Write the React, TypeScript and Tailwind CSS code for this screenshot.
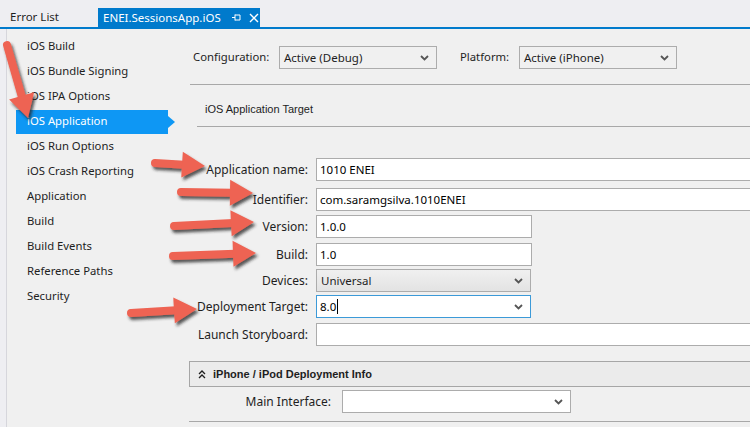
import React from "react";

const SIDEBAR = [
  "iOS Build",
  "iOS Bundle Signing",
  "iOS IPA Options",
  "iOS Application",
  "iOS Run Options",
  "iOS Crash Reporting",
  "Application",
  "Build",
  "Build Events",
  "Reference Paths",
  "Security",
];

const ui = { fontFamily: '"Noto Sans", "Open Sans", sans-serif' };
const classic = { fontFamily: '"Liberation Sans", Arial, sans-serif' };

const Chevron = () => (
  <svg width="9" height="6" viewBox="0 0 9 6" className="shrink-0">
    <path d="M1 1 L4.5 4.5 L8 1" fill="none" stroke="#555" strokeWidth="1.8" />
  </svg>
);

const Select = ({ value, className = "" }: { value: string; className?: string }) => (
  <div className={`flex h-[23px] items-center justify-between border border-[#acacac] pl-[4px] pr-[7px] text-[11.5px] text-[#1e1e1e] ${className}`}>
    <span>{value}</span>
    <Chevron />
  </div>
);

const Input = ({ value, className = "" }: { value: string; className?: string }) => (
  <div className={`flex h-[23px] items-center border pl-[3px] text-[11.5px] text-black ${className}`}>
    <span>{value}</span>
  </div>
);

type Arrow = { x1: number; y1: number; x2: number; y2: number };

// red annotation arrows drawn over the screenshot
const ARROWS: Arrow[] = [
  { x1: 7, y1: 45, x2: 28, y2: 118 },
  { x1: 155, y1: 163, x2: 205, y2: 166 },
  { x1: 181, y1: 192, x2: 253, y2: 193 },
  { x1: 174, y1: 226, x2: 254, y2: 222 },
  { x1: 173, y1: 256, x2: 256, y2: 253 },
  { x1: 131, y1: 313, x2: 197, y2: 309 },
];

const arrowPoints = ({ x1, y1, x2, y2 }: Arrow) => {
  const dx = x2 - x1;
  const dy = y2 - y1;
  const len = Math.hypot(dx, dy);
  const ux = dx / len;
  const uy = dy / len;
  const px = -uy;
  const py = ux;
  const head = 23;
  const hw = 13;
  const bx = x2 - ux * head;
  const by = y2 - uy * head;
  return {
    shaft: `M${x1} ${y1} L${bx + ux * 2} ${by + uy * 2}`,
    head: `${x2},${y2} ${bx + px * hw},${by + py * hw} ${bx - px * hw},${by - py * hw}`,
  };
};

const Annotations = () => (
  <svg className="pointer-events-none absolute inset-0" width="750" height="427">
    <defs>
      <filter id="sh" x="-20%" y="-20%" width="140%" height="140%">
        <feDropShadow dx="2" dy="3" stdDeviation="1.6" floodColor="#202020" floodOpacity="0.75" />
      </filter>
    </defs>
    {ARROWS.map((a, i) => {
      const p = arrowPoints(a);
      return (
        <g key={i} filter="url(#sh)">
          <path d={p.shaft} stroke="#ee6352" strokeWidth="8" strokeLinecap="round" fill="none" />
          <polygon points={p.head} fill="#ee6352" />
        </g>
      );
    })}
  </svg>
);

const FormRow = ({ label, children, className = "" }: { label: string; children: React.ReactNode; className?: string }) => (
  <div className={`flex items-center ${className}`}>
    <div className="w-[120px] shrink-0 pr-[1px] text-right text-[12px] text-[#1e1e1e]">{label}</div>
    <div className="ml-[7px] flex-1">{children}</div>
  </div>
);

export default function App() {
  return (
    <div className="relative h-[427px] w-[750px] overflow-hidden bg-[#eeeef2]" style={ui}>
      {/* tab strip */}
      <div className="flex h-[27px] items-end">
        <div className="mb-[1px] ml-[10px] w-[88px] text-[11.5px] leading-[18px] text-[#1e1e1e]">Error List</div>
        <div className="flex h-[19px] w-[162px] items-center bg-[#007acc] pl-[5px] text-[11.5px] text-white">
          <span>ENEI.SessionsApp.iOS</span>
          <svg width="9" height="7" viewBox="0 0 9 7" className="ml-[11px]">
            <path d="M0 3.5 H3 M3 0.5 V6.5 M3 1 H8 V6 H3" fill="none" stroke="#fff" strokeWidth="1" />
          </svg>
          <svg width="10" height="10" viewBox="0 0 10 10" className="ml-[8px]">
            <path d="M1 1 L9 9 M9 1 L1 9" stroke="#fff" strokeWidth="1.4" />
          </svg>
        </div>
      </div>
      <div className="h-[2px] bg-[#007acc]" />

      <div className="flex h-[398px]">
        <div className="w-[7px] shrink-0 border-r border-[#d6d6dc]" />
        <div className="flex min-w-0 flex-1 bg-[#f0f0f0]">
          {/* sidebar */}
          <div className="w-[182px] shrink-0 pt-[5px]">
            {SIDEBAR.map((item) => {
              const active = item === "iOS Application";
              return (
                <div key={item} className="relative ml-[9px] flex h-[25px] items-center">
                  <div
                    className={`flex h-[24px] w-[152px] items-center pl-[11px] text-[11.3px] ${
                      active ? "bg-[#0e97f4] text-white" : "text-[#1e1e1e]"
                    }`}
                  >
                    {item}
                  </div>
                  {active && (
                    <div className="h-0 w-0 border-y-[6px] border-l-[7px] border-y-transparent border-l-[#0e97f4]" />
                  )}
                </div>
              );
            })}
          </div>

          {/* main panel */}
          <div className="min-w-0 flex-1 overflow-hidden pt-[17px]">
            <div className="flex items-center pl-[4px] text-[11.3px] text-[#1e1e1e]">
              <span className="w-[86px] shrink-0">Configuration:</span>
              <Select value="Active (Debug)" className="w-[158px] shrink-0" />
              <span className="ml-[23px] w-[59px] shrink-0">Platform:</span>
              <Select value="Active (iPhone)" className="w-[158px] shrink-0" />
            </div>
            <div className="mt-[15px] ml-[1px] border-t border-[#a8a8a8]" />
            <div className="ml-[8px] flex h-[42px] items-center border-b border-[#a8a8a8] pl-[8px] pt-[8px] text-[11px] text-[#1e1e1e]" style={classic}>
              iOS Application Target
            </div>

            <div className="pt-[31px]">
              <FormRow label="Application name:">
                <Input value="1010 ENEI" className="w-[460px] border-[#acacac] bg-white" />
              </FormRow>
              <FormRow label="Identifier:" className="mt-[7px]">
                <Input value="com.saramgsilva.1010ENEI" className="w-[460px] border-[#acacac] bg-white" />
              </FormRow>
              <FormRow label="Version:" className="mt-[4px]">
                <Input value="1.0.0" className="w-[216px] border-[#acacac] bg-white" />
              </FormRow>
              <FormRow label="Build:" className="mt-[5px]">
                <Input value="1.0" className="w-[216px] border-[#acacac] bg-white" />
              </FormRow>
              <FormRow label="Devices:" className="mt-[3px]">
                <Select value="Universal" className="w-[215px] bg-gradient-to-b from-[#f0f0f0] to-[#e3e3e3]" />
              </FormRow>
              <FormRow label="Deployment Target:" className="mt-[3px]">
                <div className="flex h-[23px] w-[215px] items-center justify-between border border-[#3c9ad8] bg-white pl-[3px] pr-[7px] text-[11.5px] text-black">
                  <span className="flex items-center">
                    8.0<span className="ml-px inline-block h-[15px] w-px bg-black" />
                  </span>
                  <Chevron />
                </div>
              </FormRow>
              <FormRow label="Launch Storyboard:" className="mt-[5px]">
                <Input value="" className="w-[460px] border-[#acacac] bg-white" />
              </FormRow>
            </div>

            <div className="mt-[15px] flex h-[26px] w-[580px] items-center border border-[#a6a6a6] bg-[#ebebeb] pl-[8px] text-[11px] font-bold text-[#1e1e1e]" style={classic}>
              <svg width="8" height="9" viewBox="0 0 8 9" className="mr-[7px]">
                <path d="M1 4 L4 1 L7 4 M1 8 L4 5 L7 8" fill="none" stroke="#1e1e1e" strokeWidth="1.3" />
              </svg>
              iPhone / iPod Deployment Info
            </div>
            <div className="mt-[3px] flex items-center">
              <div className="w-[142px] shrink-0 text-right text-[12px] text-[#1e1e1e]">Main Interface:</div>
              <Select value="" className="ml-[11px] w-[229px] bg-white" />
            </div>
            <div className="mt-[8px] border-t border-[#a8a8a8]" />
          </div>
        </div>
      </div>

      <Annotations />
    </div>
  );
}
